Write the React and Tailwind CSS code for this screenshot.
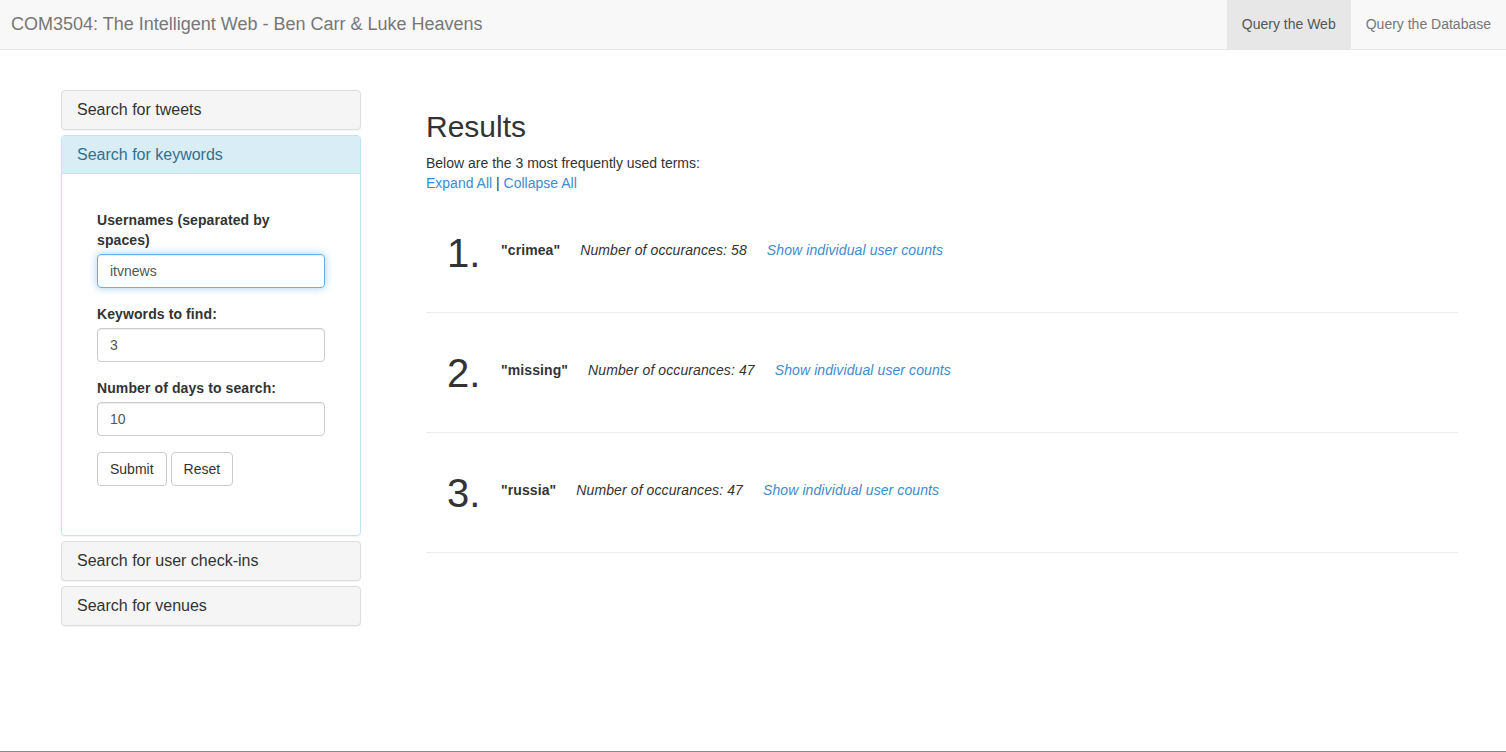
import React from "react";

const font = { fontFamily: '"Liberation Sans", Arial, Helvetica, sans-serif' };

function CollapsedPanel({ title }) {
  return (
    <div className="rounded-[4px] border border-[#ddd] bg-[#f5f5f5] shadow-[0_1px_1px_rgba(0,0,0,0.05)]">
      <div className="px-[15px] py-[10px] text-[16px] leading-[18px] text-[#333]">{title}</div>
    </div>
  );
}

function Field({ label, value, focused }) {
  return (
    <div className="mb-[16px]">
      <label className="mb-[4px] block text-[14px] font-bold leading-[20px] tracking-[0.1px] text-[#333]">{label}</label>
      <div
        className={
          "h-[34px] w-full rounded-[4px] border px-[12px] py-[6px] text-[14px] leading-[20px] text-[#555] " +
          (focused
            ? "border-[#66afe9] shadow-[inset_0_1px_1px_rgba(0,0,0,0.075),0_0_8px_rgba(102,175,233,0.6)]"
            : "border-[#ccc] shadow-[inset_0_1px_1px_rgba(0,0,0,0.075)]")
        }
      >
        {value}
      </div>
    </div>
  );
}

function ResultItem({ n, term, count }) {
  return (
    <div className="flex h-[120px] items-start border-b border-[#eee] pl-[21px]">
      <div className="mt-[38px] w-[54px] text-[40px] leading-[44px] text-[#333]">{n}.</div>
      <div className="mt-[47px] flex gap-5 text-[14px] leading-[20px] tracking-[0.1px]">
        <span className="font-bold text-[#333]">"{term}"</span>
        <span className="italic text-[#333]">Number of occurances: {count}</span>
        <span className="italic text-[#428bca]">Show individual user counts</span>
      </div>
    </div>
  );
}

export default function App() {
  return (
    <div style={font} className="flex min-h-[752px] flex-col bg-white text-[14px] text-[#333]">
      <div className="flex h-[50px] items-stretch justify-between border-b border-[#e7e7e7] bg-[#f8f8f8]">
        <div className="flex items-center pl-[11px] text-[18px] text-[#777]">
          COM3504: The Intelligent Web - Ben Carr &amp; Luke Heavens
        </div>
        <div className="flex items-stretch text-[14px]">
          <div className="flex items-center bg-[#e7e7e7] px-[15px] text-[#555]">Query the Web</div>
          <div className="flex items-center px-[15px] text-[#777]">Query the Database</div>
        </div>
      </div>

      <div className="flex flex-1 items-start pl-[61px] pr-[48px]">
        <div className="mt-[40px] flex w-[300px] flex-col gap-[5px]">
          <CollapsedPanel title="Search for tweets" />
          <div className="rounded-[4px] border border-[#bce8f1] bg-white shadow-[0_1px_1px_rgba(0,0,0,0.05)]">
            <div className="rounded-t-[3px] border-b border-[#bce8f1] bg-[#d9edf7] px-[15px] py-[10px] text-[16px] leading-[17px] text-[#31708f]">
              Search for keywords
            </div>
            <div className="p-[15px]">
              <div className="px-[20px] pb-[20px] pt-[21px]">
                <Field
                  label={
                    <>
                      Usernames (separated by
                      <br />
                      spaces)
                    </>
                  }
                  value="itvnews"
                  focused
                />
                <Field label="Keywords to find:" value="3" />
                <Field label="Number of days to search:" value="10" />
                <div className="mb-[14px] flex gap-[4px]">
                  <button className="h-[34px] rounded-[4px] border border-[#ccc] bg-white px-[12px] text-[14px] text-[#333]">
                    Submit
                  </button>
                  <button className="h-[34px] rounded-[4px] border border-[#ccc] bg-white px-[12px] text-[14px] text-[#333]">
                    Reset
                  </button>
                </div>
              </div>
            </div>
          </div>
          <CollapsedPanel title="Search for user check-ins" />
          <CollapsedPanel title="Search for venues" />
        </div>

        <div className="ml-[65px] mt-[60px] flex-1">
          <h2 className="mb-[10px] text-[30px] font-normal leading-[33px] text-[#333]">Results</h2>
          <div className="leading-[20px]">Below are the 3 most frequently used terms:</div>
          <div className="leading-[20px]">
            <span className="text-[#428bca]">Expand All</span> | <span className="text-[#428bca]">Collapse All</span>
          </div>
          <ResultItem n={1} term="crimea" count={58} />
          <ResultItem n={2} term="missing" count={47} />
          <ResultItem n={3} term="russia" count={47} />
        </div>
      </div>
      <div className="h-px bg-[#8a8a8a]" />
    </div>
  );
}
